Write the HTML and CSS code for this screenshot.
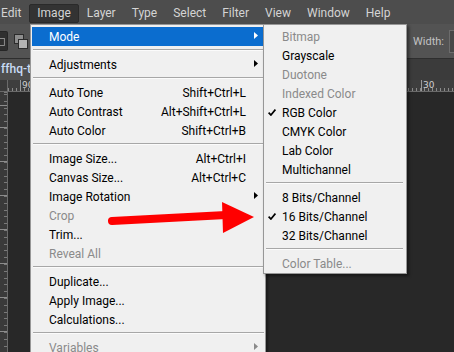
FILE: index.html
```html
<!DOCTYPE html>
<html>
<head>
<meta charset="utf-8">
<link rel="stylesheet" href="styles.css">
</head>
<body>
<div class="app">
  <div class="menubar">
    <div class="mb-item first">Edit</div>
    <div class="mb-item open">Image</div>
    <div class="mb-item">Layer</div>
    <div class="mb-item">Type</div>
    <div class="mb-item">Select</div>
    <div class="mb-item">Filter</div>
    <div class="mb-item">View</div>
    <div class="mb-item">Window</div>
    <div class="mb-item">Help</div>
  </div>

  <div class="options">
    <div class="opt-left">
      <div class="opt-btn selected">
        <svg width="8" height="20" viewBox="0 0 8 20"><rect x="-3" y="6" width="8" height="8" fill="none" stroke="#9a9a9a" stroke-width="1"/></svg>
      </div>
      <svg class="opt-icon" width="14" height="16" viewBox="0 0 14 16">
        <rect x="0.5" y="0.5" width="9" height="9" fill="#8e8e8e" stroke="#2c2c2c"/>
        <rect x="4.5" y="5.5" width="9" height="9" fill="#b4b4b4" stroke="#2c2c2c"/>
      </svg>
    </div>
    <div class="opt-right">
      <span class="opt-label">Width:</span>
      <div class="opt-input"></div>
    </div>
  </div>

  <div class="tabrow">
    <div class="doc-tab">ffhq-t</div>
  </div>

  <div class="hruler">
    <div class="corner"></div>
    <div class="hstrip">
      <span class="rl-major" style="left:12px"></span><span class="rl-num" style="left:14px">90</span>
      <span class="rl-major" style="left:413px"></span><span class="rl-num" style="left:415px">30</span>
    </div>
  </div>

  <div class="work">
    <div class="vruler"></div>
    <div class="canvas"></div>
  </div>

  <div class="menu main-menu">
    <div class="mi active"><span class="lbl">Mode</span><span class="sc"></span><svg class="arr" width="4" height="7" viewBox="0 0 4 7"><path d="M0 0L4 3.5L0 7Z"/></svg></div>
    <div class="sep"></div>
    <div class="mi"><span class="lbl">Adjustments</span><span class="sc"></span><svg class="arr" width="4" height="7" viewBox="0 0 4 7"><path d="M0 0L4 3.5L0 7Z"/></svg></div>
    <div class="sep"></div>
    <div class="mi"><span class="lbl">Auto Tone</span><span class="sc">Shift+Ctrl+L</span><span class="arr"></span></div>
    <div class="mi"><span class="lbl">Auto Contrast</span><span class="sc">Alt+Shift+Ctrl+L</span><span class="arr"></span></div>
    <div class="mi"><span class="lbl">Auto Color</span><span class="sc">Shift+Ctrl+B</span><span class="arr"></span></div>
    <div class="sep"></div>
    <div class="mi"><span class="lbl">Image Size...</span><span class="sc">Alt+Ctrl+I</span><span class="arr"></span></div>
    <div class="mi"><span class="lbl">Canvas Size...</span><span class="sc">Alt+Ctrl+C</span><span class="arr"></span></div>
    <div class="mi"><span class="lbl">Image Rotation</span><span class="sc"></span><svg class="arr" width="4" height="7" viewBox="0 0 4 7"><path d="M0 0L4 3.5L0 7Z"/></svg></div>
    <div class="mi disabled"><span class="lbl">Crop</span><span class="sc"></span><span class="arr"></span></div>
    <div class="mi"><span class="lbl">Trim...</span><span class="sc"></span><span class="arr"></span></div>
    <div class="mi disabled"><span class="lbl">Reveal All</span><span class="sc"></span><span class="arr"></span></div>
    <div class="sep"></div>
    <div class="mi"><span class="lbl">Duplicate...</span><span class="sc"></span><span class="arr"></span></div>
    <div class="mi"><span class="lbl">Apply Image...</span><span class="sc"></span><span class="arr"></span></div>
    <div class="mi"><span class="lbl">Calculations...</span><span class="sc"></span><span class="arr"></span></div>
    <div class="sep"></div>
    <div class="mi disabled"><span class="lbl">Variables</span><span class="sc"></span><svg class="arr" width="4" height="7" viewBox="0 0 4 7"><path d="M0 0L4 3.5L0 7Z"/></svg></div>
  </div>

  <div class="menu sub-menu">
    <div class="mi disabled"><span class="chk"></span><span class="lbl">Bitmap</span></div>
    <div class="mi"><span class="chk"></span><span class="lbl">Grayscale</span></div>
    <div class="mi disabled"><span class="chk"></span><span class="lbl">Duotone</span></div>
    <div class="mi disabled"><span class="chk"></span><span class="lbl">Indexed Color</span></div>
    <div class="mi"><span class="chk"><svg width="8" height="7" viewBox="0 0 8 7"><path d="M0.6 3.6L2.9 6L7.4 0.6" fill="none" stroke="#000" stroke-width="1.7"/></svg></span><span class="lbl">RGB Color</span></div>
    <div class="mi"><span class="chk"></span><span class="lbl">CMYK Color</span></div>
    <div class="mi"><span class="chk"></span><span class="lbl">Lab Color</span></div>
    <div class="mi"><span class="chk"></span><span class="lbl">Multichannel</span></div>
    <div class="sep"></div>
    <div class="mi"><span class="chk"></span><span class="lbl">8 Bits/Channel</span></div>
    <div class="mi"><span class="chk"><svg width="8" height="7" viewBox="0 0 8 7"><path d="M0.6 3.6L2.9 6L7.4 0.6" fill="none" stroke="#000" stroke-width="1.7"/></svg></span><span class="lbl">16 Bits/Channel</span></div>
    <div class="mi"><span class="chk"></span><span class="lbl">32 Bits/Channel</span></div>
    <div class="sep"></div>
    <div class="mi disabled"><span class="chk"></span><span class="lbl">Color Table...</span></div>
  </div>

  <svg class="red-arrow" width="160" height="40" viewBox="0 0 160 40">
    <path d="M4 19L118 13" stroke="#ff0000" stroke-width="8" stroke-linecap="round" fill="none"/>
    <path d="M114 0L146 15L115 31Z" fill="#ff0000"/>
  </svg>
</div>
</body>
</html>
```

FILE: styles.css
```css
* { box-sizing: border-box; }
html, body { margin: 0; padding: 0; }
body {
  width: 454px;
  height: 352px;
  overflow: hidden;
  background: #282828;
  font-family: Roboto, "Noto Sans", Arial, sans-serif;
  font-size: 12px;
}
.app {
  position: relative;
  width: 454px;
  height: 352px;
  display: flex;
  flex-direction: column;
  overflow: hidden;
}

/* menubar */
.menubar {
  height: 24px;
  background: #4d4d4d;
  display: flex;
  align-items: flex-start;
  flex: none;
}
.mb-item {
  margin-top: 4px;
  height: 19px;
  line-height: 17px;
  padding: 0 7px;
  color: #d4d4d4;
  white-space: nowrap;
  border: 1px solid transparent;
  border-radius: 2px;
}
.mb-item.first { margin-left: -7px; }
.mb-item.open {
  background: #333333;
  border-color: #2a2a2a;
}

/* options bar */
.options {
  height: 35px;
  background: #535353;
  display: flex;
  align-items: center;
  justify-content: space-between;
  flex: none;
  border-bottom: 1px solid #2e2e2e;
}
.opt-left { display: flex; align-items: center; gap: 6px; }
.opt-btn {
  width: 8px;
  height: 20px;
  background: #2f2f2f;
  border: 1px solid #262626;
  border-left: none;
  border-radius: 0 2px 2px 0;
  display: flex;
}
.opt-icon { display: block; margin-top: 2px; }
.opt-right { display: flex; align-items: center; gap: 5px; margin-right: -35px; }
.opt-label { color: #c2c2c2; font-size: 11px; }
.opt-input {
  width: 40px;
  height: 23px;
  background: #474747;
  border: 1px solid #6c6c6c;
}

/* document tab row */
.tabrow {
  height: 21px;
  background: #3b3b3b;
  display: flex;
  flex: none;
}
.doc-tab {
  width: 60px;
  background: #4f4f4f;
  color: #c9dcf5;
  font-weight: 500;
  padding-left: 1px;
  line-height: 21px;
  font-size: 12px;
}

/* rulers */
.hruler {
  height: 12px;
  display: flex;
  flex: none;
  background: #3e3e3e;
}
.corner {
  width: 8px;
  background: #3a3a3a;
  border-right: 1px solid #6a6a6a;
  border-bottom: 1px solid #6a6a6a;
}
.hstrip {
  flex: 1;
  position: relative;
  border-bottom: 1px solid #6a6a6a;
  background-image: repeating-linear-gradient(to right, #8a8a8a 0 1px, transparent 1px 4px);
  background-size: 100% 3px;
  background-repeat: no-repeat;
  background-position: 0 100%;
}
.rl-major {
  position: absolute;
  top: 0;
  bottom: 0;
  width: 1px;
  background: #9a9a9a;
}
.rl-num {
  position: absolute;
  top: 1px;
  font-size: 9px;
  line-height: 9px;
  color: #cfcfcf;
  font-family: "DejaVu Sans", sans-serif;
}
.work {
  flex: 1;
  display: flex;
}
.vruler {
  width: 8px;
  background-color: #3a3a3a;
  border-right: 1px solid #6a6a6a;
  background-image:
    repeating-linear-gradient(to bottom, #8c8c8c 0 1px, transparent 1px 34px),
    repeating-linear-gradient(to bottom, #7a7a7a 0 1px, transparent 1px 6.8px);
  background-size: 8px 100%, 4px 100%;
  background-position: 0 35px, 4px 2px;
  background-repeat: repeat-y;
}
.canvas { flex: 1; background: #282828; }

/* menus */
.menu {
  position: absolute;
  background: #f0f0f0;
  border: 1px solid #979797;
  padding: 2px 1px 0;
  color: #000;
  font-size: 12px;
}
.main-menu {
  left: 30px;
  top: 24px;
  width: 236px;
  height: 340px;
  box-shadow: 2px 2px 2px rgba(0,0,0,0.35);
}
.sub-menu {
  left: 263px;
  top: 24px;
  width: 144px;
  box-shadow: 2px 2px 3px rgba(0,0,0,0.45);
}
.mi {
  height: 19px;
  display: flex;
  align-items: center;
  white-space: nowrap;
}
.main-menu .mi { padding: 0 6px 0 17px; }
.sub-menu .mi { padding: 0 4px 0 3px; }
.mi .lbl { flex: 1; }
.mi .sc { margin-right: 4px; }
.mi .arr { width: 4px; height: 7px; margin-left: 4px; margin-top: -3px; fill: #000; flex: none; }
.mi.active { background: #0b6dcf; color: #fff; }
.mi.active .arr { fill: #fff; }
.mi.disabled { color: #8a8a8a; }
.mi.disabled .arr { fill: #8a8a8a; }
.chk { width: 14px; height: 19px; display: flex; align-items: center; flex: none; }
.chk svg { display: block; margin-top: -1px; }
.sep { height: 9px; padding-top: 3px; }
.sep::before {
  content: "";
  display: block;
  height: 1px;
  background: #a7a7a7;
  border-bottom: 1px solid #fbfbfb;
  box-sizing: content-box;
}
.main-menu .sep::before { margin: 0 0 0 1px; }
.sub-menu .sep::before { margin: 0 2px 0 1px; }

.red-arrow {
  position: absolute;
  left: 108px;
  top: 202px;
}
```
